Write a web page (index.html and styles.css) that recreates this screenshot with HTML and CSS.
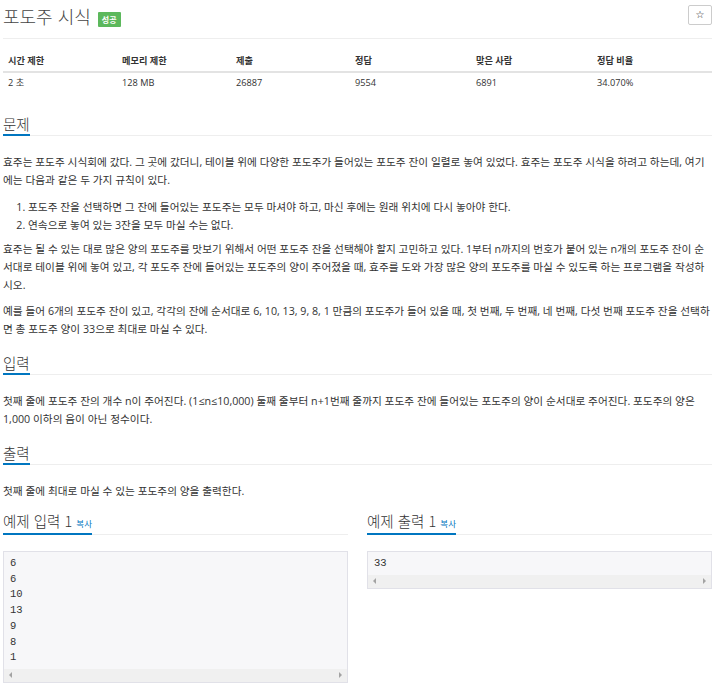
FILE: index.html
```html
<!DOCTYPE html>
<html lang="ko">
<head>
<meta charset="utf-8">
<title>포도주 시식</title>
<link rel="stylesheet" href="styles.css">
</head>
<body>
<div class="page">
  <div class="problem-header">
    <h1 class="title"><span class="title-text">포도주 시식</span><span class="badge">성공</span></h1>
    <button class="star-btn" type="button">☆</button>
  </div>

  <div class="info-table">
    <div class="th">시간 제한</div>
    <div class="th">메모리 제한</div>
    <div class="th">제출</div>
    <div class="th">정답</div>
    <div class="th">맞은 사람</div>
    <div class="th">정답 비율</div>
    <div class="td">2 초</div>
    <div class="td">128 MB</div>
    <div class="td">26887</div>
    <div class="td">9554</div>
    <div class="td">6891</div>
    <div class="td">34.070%</div>
  </div>

  <section class="section first">
    <div class="section-head"><h2>문제</h2></div>
    <div class="problem-text">
      <p>효주는 포도주 시식회에 갔다. 그 곳에 갔더니, 테이블 위에 다양한 포도주가 들어있는 포도주 잔이 일렬로 놓여 있었다. 효주는 포도주 시식을 하려고 하는데, 여기에는 다음과 같은 두 가지 규칙이 있다.</p>
      <ol>
        <li>포도주 잔을 선택하면 그 잔에 들어있는 포도주는 모두 마셔야 하고, 마신 후에는 원래 위치에 다시 놓아야 한다.</li>
        <li>연속으로 놓여 있는 3잔을 모두 마실 수는 없다.</li>
      </ol>
      <p>효주는 될 수 있는 대로 많은 양의 포도주를 맛보기 위해서 어떤 포도주 잔을 선택해야 할지 고민하고 있다. 1부터 n까지의 번호가 붙어 있는 n개의 포도주 잔이 순서대로 테이블 위에 놓여 있고, 각 포도주 잔에 들어있는 포도주의 양이 주어졌을 때, 효주를 도와 가장 많은 양의 포도주를 마실 수 있도록 하는 프로그램을 작성하시오.</p>
      <p>예를 들어 6개의 포도주 잔이 있고, 각각의 잔에 순서대로 6, 10, 13, 9, 8, 1 만큼의 포도주가 들어 있을 때, 첫 번째, 두 번째, 네 번째, 다섯 번째 포도주 잔을 선택하면 총 포도주 양이 33으로 최대로 마실 수 있다.</p>
    </div>
  </section>

  <section class="section">
    <div class="section-head"><h2>입력</h2></div>
    <div class="problem-text word-wrap">
      <p>첫째 줄에 포도주 잔의 개수 n이 주어진다. (1≤n≤10,000) 둘째 줄부터 n+1번째 줄까지 포도주 잔에 들어있는 포도주의 양이 순서대로 주어진다. 포도주의 양은 1,000 이하의 음이 아닌 정수이다.</p>
    </div>
  </section>

  <section class="section">
    <div class="section-head"><h2>출력</h2></div>
    <div class="problem-text">
      <p>첫째 줄에 최대로 마실 수 있는 포도주의 양을 출력한다.</p>
    </div>
  </section>

  <div class="samples">
    <section class="sample">
      <div class="section-head"><h2>예제 입력 1 <a class="copy" href="#">복사</a></h2></div>
      <div class="sample-box">
        <pre class="sample-data">6
6
10
13
9
8
1</pre>
        <div class="scrollbar"><span class="arrow left"></span><span class="arrow right"></span></div>
      </div>
    </section>
    <section class="sample">
      <div class="section-head"><h2>예제 출력 1 <a class="copy" href="#">복사</a></h2></div>
      <div class="sample-box">
        <pre class="sample-data">33</pre>
        <div class="scrollbar"><span class="arrow left"></span><span class="arrow right"></span></div>
      </div>
    </section>
  </div>
</div>
</body>
</html>
```

FILE: styles.css
```css
html, body {
  margin: 0;
  padding: 0;
  background: #fff;
}

body {
  font-family: "Open Sans", "Noto Sans CJK KR", sans-serif;
  color: #333;
}

.page {
  width: 709px;
  margin-left: 3px;
}

/* header */
.problem-header {
  display: flex;
  justify-content: space-between;
  align-items: flex-start;
  height: 38px;
  border-bottom: 1px solid #eee;
}

.title {
  display: flex;
  align-items: flex-start;
  gap: 7px;
  margin: 0;
  padding-top: 4px;
  font-family: "Noto Sans CJK KR", sans-serif;
  font-size: 18px;
  line-height: 24px;
  font-weight: 300;
  color: #444;
}

.badge {
  margin-top: 8px;
  height: 15px;
  padding: 0 4px;
  background: #5cb85c;
  color: #fff;
  font-size: 8px;
  line-height: 15px;
  font-weight: 700;
  border-radius: 1px;
}

.star-btn {
  margin-top: 5px;
  width: 24px;
  height: 20px;
  padding: 0;
  border: 1px solid #ccc;
  border-radius: 2px;
  background: #fff;
  color: #222;
  font-family: "DejaVu Sans", sans-serif;
  font-size: 10px;
  line-height: 18px;
}

/* info table */
.info-table {
  display: grid;
  grid-template-columns: 114px 114px 119px 121px 121px 1fr;
  margin-top: 12px;
  font-size: 9.2px;
  color: #333;
}

.th, .td {
  height: 20px;
  line-height: 20px;
  padding-left: 5px;
  white-space: nowrap;
}

.th {
  font-weight: 700;
  border-bottom: 2px solid #e3e3e3;
}

/* sections */
.section {
  margin-top: 14px;
}

.section.first {
  margin-top: 20px;
}

.section-head {
  border-bottom: 1px solid #eee;
}

.section-head h2 {
  display: inline-block;
  margin: 0 0 -1px 0;
  font-family: "Noto Sans CJK KR", sans-serif;
  font-size: 14.5px;
  line-height: 20px;
  font-weight: 300;
  color: #333;
  border-bottom: 2px solid #0076c0;
}

.copy {
  font-size: 8.5px;
  color: #0076c0;
  text-decoration: none;
  font-weight: 400;
}

.problem-text {
  padding-top: 17px;
  font-size: 10.7px;
  line-height: 18px;
  color: #333;
  word-break: break-all;
}

.problem-text.word-wrap {
  word-break: normal;
}

.problem-text p {
  margin: 0 0 8px 0;
}

.problem-text ol {
  margin: 9px 0 6px 0;
  padding-left: 25px;
}

/* samples */
.samples {
  display: grid;
  grid-template-columns: 345px 345px;
  column-gap: 19px;
  margin-top: 10px;
}

.sample-box {
  margin-top: 16px;
  border: 1px solid #e1e1e8;
  background: #f7f7f9;
}

.sample-data {
  margin: 0;
  padding: 4px 6px 3px 6px;
  font-family: "Liberation Mono", monospace;
  font-size: 10.5px;
  line-height: 15.7px;
  color: #333;
}

.scrollbar {
  display: flex;
  justify-content: space-between;
  align-items: center;
  height: 13px;
  padding: 0 5px;
  background: #f0f0f0;
}

.arrow {
  width: 0;
  height: 0;
  border-top: 3px solid transparent;
  border-bottom: 3px solid transparent;
}

.arrow.left {
  border-right: 3px solid #a3a3a3;
}

.arrow.right {
  border-left: 3px solid #a3a3a3;
}
```
